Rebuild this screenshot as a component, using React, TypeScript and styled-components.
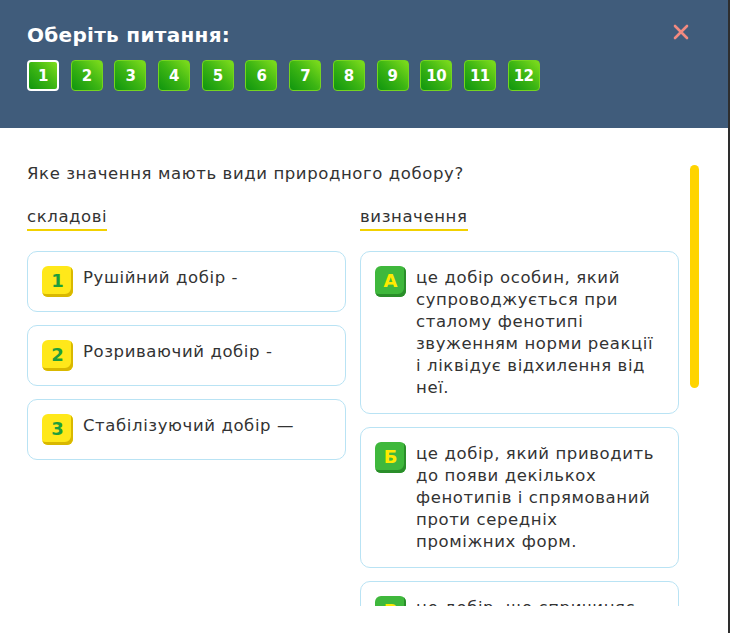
import React from "react";
import styled, { createGlobalStyle } from "styled-components";

const Global = createGlobalStyle`
  html, body { margin: 0; padding: 0; background: #fff; }
  body { font-family: "DejaVu Sans", "Noto Sans", sans-serif; }
  * { box-sizing: border-box; }
`;

const Modal = styled.div`
  width: 730px;
  height: 633px;
  background: #fff;
  border-right: 2px solid #2e2e2e;
  overflow: hidden;
  display: flex;
  flex-direction: column;
`;

const Header = styled.header`
  height: 128px;
  flex: none;
  background: #405c7b;
  padding: 22px 38px 0 27px;
  display: flex;
  justify-content: space-between;
  align-items: flex-start;
`;

const HeaderMain = styled.div`
  display: flex;
  flex-direction: column;
  gap: 12px;
`;

const Title = styled.h2`
  margin: 0;
  color: #fff;
  font-size: 20px;
  line-height: 26px;
  font-weight: 700;
  letter-spacing: 0.3px;
`;

const NumberRow = styled.div`
  display: flex;
  gap: 11.7px;
`;

const NumButton = styled.button<{ $active?: boolean }>`
  width: 32px;
  height: 31px;
  padding: 0;
  border-radius: 4px;
  border: ${(p) => (p.$active ? "2px solid #ffffff" : "1px solid #74d421")};
  background: linear-gradient(45deg, #0f950f 0%, #3cb513 50%, #80dd1c 100%);
  color: #fff;
  font-family: "DejaVu Sans", sans-serif;
  font-weight: 700;
  font-size: 15px;
  letter-spacing: -0.5px;
  display: flex;
  align-items: center;
  justify-content: center;
  cursor: pointer;
`;

const Close = styled.button`
  margin-top: 1px;
  width: 18px;
  height: 18px;
  padding: 0;
  border: none;
  background: transparent;
  cursor: pointer;
`;

const Body = styled.div`
  position: relative;
  flex: 1;
`;

const Scroll = styled.div`
  height: 478px;
  overflow: hidden;
  padding: 35px 49px 0 27px;
`;

const Thumb = styled.div`
  position: absolute;
  left: 690px;
  top: 37px;
  width: 9px;
  height: 223px;
  border-radius: 5px;
  background: #ffd400;
`;

const TextBase = styled.span`
  color: #333;
  font-size: 16.5px;
  letter-spacing: 0.6px;
  line-height: 22px;
`;

const Question = styled(TextBase).attrs({ as: "p" })`
  display: block;
  margin: 0 0 22px;
`;

const Columns = styled.div`
  display: grid;
  grid-template-columns: 319px 319px;
  column-gap: 14px;
`;

const Column = styled.div<{ $gap: number }>`
  display: flex;
  flex-direction: column;
  gap: ${(p) => p.$gap}px;
`;

const ColHead = styled(TextBase).attrs({ as: "div" })`
  align-self: flex-start;
  line-height: 20px;
  padding-bottom: 2px;
  border-bottom: 2px solid #f2d100;
  margin-bottom: 7px;
`;

const Card = styled.div`
  border: 1px solid #b9e3f4;
  border-radius: 10px;
  padding: 15px 19px 14px 14px;
  display: flex;
  align-items: flex-start;
  gap: 10px;
  background: #fff;
`;

const Badge = styled.span<{ $kind: "num" | "letter" }>`
  flex: none;
  width: 31px;
  height: 31px;
  margin-top: -1px;
  border-radius: 6px;
  display: flex;
  align-items: center;
  justify-content: center;
  font-family: "DejaVu Sans", sans-serif;
  font-weight: 900;
  font-size: 18px;
  padding-bottom: 2px;
  background: ${(p) => (p.$kind === "num" ? "#ffe81a" : "#3fb83c")};
  color: ${(p) => (p.$kind === "num" ? "#1e9e3c" : "#ffea00")};
  box-shadow: inset -2px -3px 0 ${(p) => (p.$kind === "num" ? "#d9b800" : "#2a8e2a")};
`;

const CardText = styled(TextBase)``;

const nums = Array.from({ length: 12 }, (_, i) => i + 1);

const left = ["Рушійний добір -", "Розриваючий добір -", "Стабілізуючий добір —"];
const right: [string, string][] = [
  ["А", "це добір особин, який супроводжується при сталому фенотипі звуженням норми реакції і ліквідує відхилення від неї."],
  ["Б", "це добір, який приводить до появи декількох фенотипів і спрямований проти середніх проміжних форм."],
  ["В", "це добір, що спричиняє зміну середнього значення ознаки в певному напрямку."],
];

export default function App() {
  return (
    <>
      <Global />
      <Modal>
        <Header>
          <HeaderMain>
            <Title>Оберіть питання:</Title>
            <NumberRow>
              {nums.map((n) => (
                <NumButton key={n} $active={n === 1}>
                  {n}
                </NumButton>
              ))}
            </NumberRow>
          </HeaderMain>
          <Close aria-label="Закрити">
            <svg width="18" height="18" viewBox="0 0 18 18">
              <path d="M3 3 L15 15 M15 3 L3 15" stroke="#f28a80" strokeWidth="2.6" strokeLinecap="round" />
            </svg>
          </Close>
        </Header>
        <Body>
          <Scroll>
            <Question>Яке значення мають види природного добору?</Question>
            <Columns>
              <Column $gap={13}>
                <ColHead>складові</ColHead>
                {left.map((t, i) => (
                  <Card key={t}>
                    <Badge $kind="num">{i + 1}</Badge>
                    <CardText>{t}</CardText>
                  </Card>
                ))}
              </Column>
              <Column $gap={13}>
                <ColHead>визначення</ColHead>
                {right.map(([l, t]) => (
                  <Card key={l}>
                    <Badge $kind="letter">{l}</Badge>
                    <CardText>{t}</CardText>
                  </Card>
                ))}
              </Column>
            </Columns>
          </Scroll>
          <Thumb />
        </Body>
      </Modal>
    </>
  );
}
